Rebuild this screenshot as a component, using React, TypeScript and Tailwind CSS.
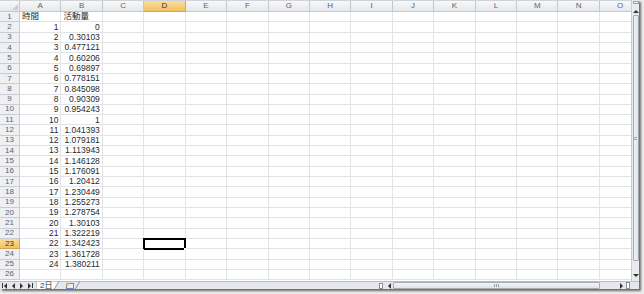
import React from "react";

const COLS = ["A","B","C","D","E","F","G","H","I","J","K","L","M","N","O"];
const VALUES = [
  "0","0.30103","0.477121","0.60206","0.69897","0.778151","0.845098","0.90309","0.954243","1",
  "1.041393","1.079181","1.113943","1.146128","1.176091","1.20412","1.230449","1.255273","1.278754",
  "1.30103","1.322219","1.342423","1.361728","1.380211",
];

const cellFont = { fontFamily: '"Liberation Sans", "Noto Sans CJK JP", sans-serif' };

function Cell({ col, row }: { col: number; row: number }) {
  let content: React.ReactNode = null;
  let align = "justify-end";
  if (row === 1 && col === 0) { content = "時間"; align = "justify-start"; }
  else if (row === 1 && col === 1) { content = "活動量"; align = "justify-start"; }
  else if (row >= 2 && row <= 25 && col === 0) content = String(row - 1);
  else if (row >= 2 && row <= 25 && col === 1) content = VALUES[row - 2];
  const selected = row === 23 && col === 3;
  return (
    <div
      className={`relative flex h-full w-[41.43px] shrink-0 items-center ${align} border-r border-b border-[#e2e4e7] px-[2px] text-[8.5px] leading-none text-[#2a2a2a]`}
    >
      {content}
      {selected && (
        <div className="absolute -left-[1px] -top-[1px] h-[12px] w-[43px] border-2 border-black">
          <div className="absolute -bottom-[3px] -right-[3px] h-[3px] w-[3px] border border-white bg-black" />
        </div>
      )}
    </div>
  );
}

function Row({ row }: { row: number }) {
  const active = row === 23;
  return (
    <div className="flex h-[10.32px] shrink-0">
      <div
        className={`flex h-full w-[20px] shrink-0 items-center justify-center border-r border-b text-[8px] leading-none ${
          active
            ? "border-[#d9a54a] bg-gradient-to-b from-[#f9dd9c] to-[#f2c25d] text-[#333]"
            : "border-[#c9cdd3] bg-[#eef0f3] text-[#5c6470]"
        }`}
      >
        {row}
      </div>
      {COLS.map((_, c) => (
        <Cell key={c} col={c} row={row} />
      ))}
    </div>
  );
}

function Tri({ dir }: { dir: "l" | "r" | "u" | "d" }) {
  const pts = {
    l: "4,0 4,6 1,3",
    r: "1,0 1,6 4,3",
    u: "0,4 6,4 3,1",
    d: "0,1 6,1 3,4",
  }[dir];
  const horiz = dir === "l" || dir === "r";
  return (
    <svg width={horiz ? 5 : 6} height={horiz ? 6 : 5} viewBox={horiz ? "0 0 5 6" : "0 0 6 5"}>
      <polygon points={pts} fill="#333" />
    </svg>
  );
}

export default function App() {
  const rows = Array.from({ length: 26 }, (_, i) => i + 1);
  return (
    <div className="relative h-[294px] w-[644px] overflow-hidden bg-[#ececec]" style={cellFont}>
      <div className="flex h-[289px] w-[639px] flex-col overflow-hidden bg-white shadow-[2px_2px_2px_rgba(0,0,0,0.55)]">
        <div className="flex min-h-0 flex-1">
          <div className="flex w-[631px] shrink-0 flex-col overflow-hidden">
            <div className="flex h-[12px] shrink-0 border-t border-[#d0d4d9]">
              <div className="relative h-full w-[20px] shrink-0 border-r border-b border-[#c4c8ce] bg-gradient-to-b from-[#f7f8f9] to-[#e6e8eb]">
                <svg className="absolute bottom-[1px] right-[1px]" width="6" height="6" viewBox="0 0 6 6">
                  <polygon points="6,0 6,6 0,6" fill="#c9ccd1" />
                </svg>
              </div>
              {COLS.map((c, i) => (
                <div
                  key={c}
                  className={`flex h-full w-[41.43px] shrink-0 items-center justify-center border-r border-b text-[8px] leading-none ${
                    i === 3
                      ? "border-[#d9a54a] bg-gradient-to-b from-[#f9dd9c] to-[#f2c25d] text-[#333]"
                      : "border-[#c4c8ce] bg-gradient-to-b from-[#f7f8f9] to-[#e6e8eb] text-[#5c6470]"
                  }`}
                >
                  {c}
                </div>
              ))}
            </div>
            {rows.map((r) => (
              <Row key={r} row={r} />
            ))}
          </div>
          <div className="flex w-[8px] shrink-0 flex-col items-center border-l border-[#c8ccd2] bg-[#e9ebee] pb-[1px]">
            <div className="mt-[1px] h-[3px] w-[6px] border border-[#9aa0a8] bg-[#f4f5f7]" />
            <div className="mt-[4px] flex h-[6px] items-center justify-center"><Tri dir="u" /></div>
            <div className="mt-[1px] flex h-[246px] w-[6px] items-center justify-center rounded-[1px] border border-[#a5abb3] bg-gradient-to-r from-[#f3f4f6] to-[#dfe2e6]">
              <div className="flex flex-col gap-[1px]">
                <div className="h-px w-[3px] bg-[#9aa0a8]" />
                <div className="h-px w-[3px] bg-[#9aa0a8]" />
              </div>
            </div>
            <div className="flex-1" />
            <div className="mb-[2px] flex h-[6px] items-center justify-center"><Tri dir="d" /></div>
          </div>
        </div>
        <div className="flex h-[8px] shrink-0 items-center border-t border-[#b9bec5] bg-[#e4e7eb]">
          <div className="flex h-full w-[36px] shrink-0 items-center gap-[3px] pl-[2px]">
            <div className="flex items-center"><div className="h-[5px] w-px bg-[#333]" /><Tri dir="l" /></div>
            <Tri dir="l" />
            <Tri dir="r" />
            <div className="flex items-center"><Tri dir="r" /><div className="h-[5px] w-px bg-[#333]" /></div>
          </div>
          <div className="relative flex h-full w-[24px] shrink-0 items-center pl-[4px]">
            <svg className="absolute left-0 top-[-1px]" width="24" height="9" viewBox="0 0 24 9">
              <polygon points="0,0 0,8.5 18,8.5 23,0" fill="#ffffff" stroke="#8f959d" strokeWidth="1" />
            </svg>
            <span className="relative text-[8px] leading-none text-[#333]">2日</span>
          </div>
          <div className="relative flex h-full w-[20px] shrink-0 items-center justify-center">
            <svg className="absolute left-0 top-[-1px]" width="20" height="9" viewBox="0 0 20 9">
              <polyline points="0,8.5 15,8.5 20,0" fill="none" stroke="#8f959d" strokeWidth="1" />
            </svg>
            <svg className="relative" width="10" height="7" viewBox="0 0 10 7">
              <rect x="1.5" y="1.5" width="7" height="5" fill="#e8eef8" stroke="#6b8cc0" strokeWidth="1" />
              <circle cx="2.5" cy="1.8" r="1.6" fill="#f0b84a" />
            </svg>
          </div>
          <div className="flex-1" />
          <div className="h-[6px] w-[4px] shrink-0 border border-[#8a9098] bg-white" />
          <div className="ml-[3px] flex w-[7px] shrink-0 justify-center"><Tri dir="l" /></div>
          <div className="flex h-[7px] w-[207px] shrink-0 items-center justify-center rounded-[1px] border border-[#a5abb3] bg-gradient-to-b from-[#f3f4f6] to-[#dfe2e6]">
            <div className="flex gap-[1px]">
              <div className="h-[3px] w-px bg-[#9aa0a8]" />
              <div className="h-[3px] w-px bg-[#9aa0a8]" />
              <div className="h-[3px] w-px bg-[#9aa0a8]" />
            </div>
          </div>
          <div className="w-[18px] shrink-0" />
          <div className="flex w-[7px] shrink-0 justify-center"><Tri dir="r" /></div>
          <div className="ml-[1px] h-[7px] w-[4px] shrink-0 border border-[#8a9098] bg-white" />
          <div className="w-[9px] shrink-0" />
        </div>
      </div>
    </div>
  );
}
